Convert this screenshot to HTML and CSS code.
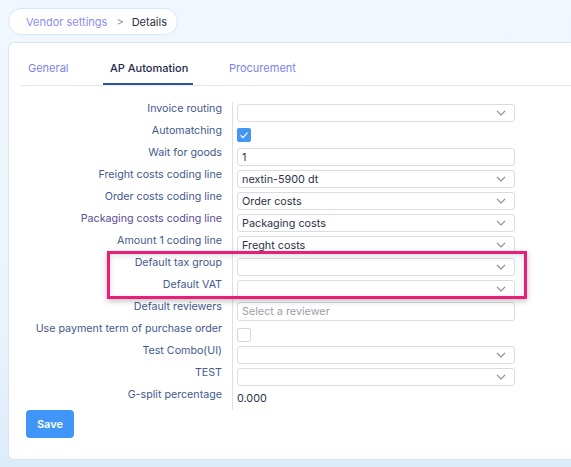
FILE: index.html
```html
<!DOCTYPE html>
<html>
<head>
<meta charset="utf-8">
<link rel="stylesheet" href="styles.css">
</head>
<body>
<div class="page">
  <nav class="crumbs"><span class="crumb-link">Vendor settings</span><span class="crumb-sep">&gt;</span><span class="crumb-cur">Details</span></nav>
  <section class="card">
    <div class="tabs">
      <div class="tab">General</div>
      <div class="tab active">AP Automation</div>
      <div class="tab">Procurement</div>
    </div>
    <div class="form">
      <div class="row"><div class="lbl">Invoice routing</div><div class="val"><div class="select"><span></span><svg class="chev" viewBox="0 0 10 6"><path d="M1 1l4 4 4-4"/></svg></div></div></div>
      <div class="row"><div class="lbl">Automatching</div><div class="val"><div class="check on"><svg viewBox="0 0 14 14"><path d="M3.5 7.2l2.4 2.4 4.6-5"/></svg></div></div></div>
      <div class="row"><div class="lbl">Wait for goods</div><div class="val"><div class="input">1</div></div></div>
      <div class="row"><div class="lbl">Freight costs coding line</div><div class="val"><div class="select"><span>nextin-5900 dt</span><svg class="chev" viewBox="0 0 10 6"><path d="M1 1l4 4 4-4"/></svg></div></div></div>
      <div class="row"><div class="lbl">Order costs coding line</div><div class="val"><div class="select"><span>Order costs</span><svg class="chev" viewBox="0 0 10 6"><path d="M1 1l4 4 4-4"/></svg></div></div></div>
      <div class="row"><div class="lbl purple">Packaging costs coding line</div><div class="val"><div class="select"><span>Packaging costs</span><svg class="chev" viewBox="0 0 10 6"><path d="M1 1l4 4 4-4"/></svg></div></div></div>
      <div class="row"><div class="lbl">Amount 1 coding line</div><div class="val"><div class="select"><span>Freght costs</span><svg class="chev" viewBox="0 0 10 6"><path d="M1 1l4 4 4-4"/></svg></div></div></div>
      <div class="row"><div class="lbl">Default tax group</div><div class="val"><div class="select"><span></span><svg class="chev" viewBox="0 0 10 6"><path d="M1 1l4 4 4-4"/></svg></div></div></div>
      <div class="row"><div class="lbl">Default VAT</div><div class="val"><div class="select"><span></span><svg class="chev" viewBox="0 0 10 6"><path d="M1 1l4 4 4-4"/></svg></div></div></div>
      <div class="row"><div class="lbl">Default reviewers</div><div class="val"><div class="input tall placeholder">Select a reviewer</div></div></div>
      <div class="row"><div class="lbl">Use payment term of purchase order</div><div class="val"><div class="check off"></div></div></div>
      <div class="row"><div class="lbl">Test Combo(UI)</div><div class="val"><div class="select"><span></span><svg class="chev" viewBox="0 0 10 6"><path d="M1 1l4 4 4-4"/></svg></div></div></div>
      <div class="row"><div class="lbl">TEST</div><div class="val"><div class="select"><span></span><svg class="chev" viewBox="0 0 10 6"><path d="M1 1l4 4 4-4"/></svg></div></div></div>
      <div class="row"><div class="lbl">G-split percentage</div><div class="val"><div class="static">0.000</div></div></div>
      <div class="highlight"></div>
    </div>
    <button class="save">Save</button>
  </section>
</div>
</body>
</html>
```

FILE: styles.css
```css
html, body {
  margin: 0;
  padding: 0;
  overflow: hidden;
}
body {
  width: 571px;
  height: 467px;
  background: linear-gradient(180deg, #f1f7fe 0%, #eaf3fc 70%, #dcecf9 100%);
  font-family: Inter, "Noto Sans", sans-serif;
  font-size: 10.7px;
  color: #2b3550;
}
.page {
  padding: 8px 0 0 8px;
}
.crumbs {
  display: flex;
  align-items: center;
  box-sizing: border-box;
  width: 170px;
  height: 27px;
  padding-left: 17px;
  background: #fff;
  border: 1px solid #d5e7f8;
  border-radius: 14px;
  font-size: 11px;
  white-space: nowrap;
}
.crumb-link { color: #8b8fea; }
.crumb-sep { color: #8d93a8; margin: 0 8px 0 9px; }
.crumb-cur { color: #2d3345; }
.card {
  margin-top: 7px;
  box-sizing: border-box;
  width: 563px;
  height: 418px;
  background: #fff;
  border: 1px solid #d3e6f8;
  border-right: none;
  border-radius: 6px 0 0 6px;
  padding: 0 0 0 11px;
}
.tabs {
  display: flex;
  height: 42px;
  border-bottom: 1px solid #e4e7ec;
}
.tab {
  box-sizing: border-box;
  height: 42px;
  padding-top: 19px;
  line-height: 13px;
  font-size: 11px;
  color: #7b83e8;
  white-space: nowrap;
}
.tab:nth-child(1) { padding-left: 8px; width: 83px; }
.tab:nth-child(2) { width: 90px; padding-left: 7px; }
.tab:nth-child(3) { padding-left: 36px; }
.tab.active {
  color: #1f2b4a;
  font-weight: 500;
  border-bottom: 2px solid #2c5899;
  margin-bottom: -1px;
}
.form {
  position: relative;
  margin-top: 16px;
}
.row {
  display: grid;
  grid-template-columns: 212px 283px;
  height: 22px;
}
.lbl {
  text-align: right;
  padding-right: 10px;
  line-height: 14px;
  color: #45598e;
  white-space: nowrap;
}
.lbl.purple { color: #5a4a91; }
.val {
  border-left: 1px solid #dcdfe4;
  padding-left: 4px;
  padding-top: 2px;
}
.select, .input {
  box-sizing: border-box;
  width: 278px;
  height: 18px;
  border: 1px solid #d9dce1;
  border-radius: 3px;
  display: flex;
  align-items: center;
  justify-content: space-between;
  padding: 0 8px 0 4px;
  font-size: 10.8px;
  color: #2d3347;
}
.input.tall { height: 19px; }
.placeholder { color: #9aa0ab; }
.chev {
  width: 10px;
  height: 6px;
  fill: none;
  stroke: #8a8f99;
  stroke-width: 1.1;
}
.check {
  box-sizing: border-box;
  width: 14px;
  height: 14px;
  border-radius: 2px;
  margin-top: 2px;
}
.check.on { background: #4695f2; }
.check.on svg { width: 14px; height: 14px; display: block; fill: none; stroke: #fff; stroke-width: 1.2; }
.check.off { border: 1px solid #d3d6db; margin-top: 4px; }
.static {
  padding-top: 2px;
  font-size: 10.8px;
  color: #2d3347;
}
.highlight {
  position: absolute;
  left: 87px;
  top: 149px;
  width: 420px;
  height: 48px;
  box-sizing: border-box;
  border: 3px solid #ea1d78;
  box-shadow: 0 2px 6px rgba(0,0,0,0.25), inset 0 2px 6px rgba(0,0,0,0.12);
  pointer-events: none;
}
.save {
  display: block;
  margin: 0 0 0 6px;
  width: 48px;
  height: 28px;
  border: none;
  border-radius: 4px;
  background: #3f96f7;
  color: #fff;
  font-family: Inter, "Noto Sans", sans-serif;
  font-weight: 600;
  font-size: 11px;
}
```
